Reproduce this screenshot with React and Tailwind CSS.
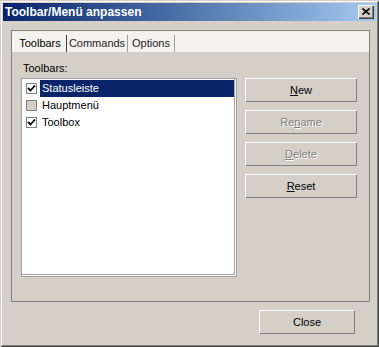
import React from 'react';

const Check = () => (
  <svg width="9" height="9" viewBox="0 0 9 9" className="block">
    <path d="M1 4 L3.5 6.5 L8 1.5" fill="none" stroke="#000" strokeWidth="1.8" />
  </svg>
);

function CheckBox({ checked }) {
  return (
    <div
      className={`w-[11px] h-[11px] border border-[#808080] flex items-center justify-center shrink-0 ${
        checked ? 'bg-white' : 'bg-[#d4d0c8]'
      }`}
    >
      {checked && <Check />}
    </div>
  );
}

function Button({ children, disabled, className = '' }) {
  return (
    <button
      className={`h-[24px] bg-[#d4d0c8] border-t border-l border-white border-b border-r border-b-[#808080] border-r-[#808080] flex items-center justify-center leading-none ${
        disabled ? 'text-[#808080] [text-shadow:1px_1px_0_#fff]' : 'text-black'
      } ${className}`}
    >
      {children}
    </button>
  );
}

export default function App() {
  const items = [
    { name: 'Statusleiste', checked: true, selected: true },
    { name: 'Hauptmenü', checked: false },
    { name: 'Toolbox', checked: true },
  ];

  return (
    <div className="w-[379px] h-[347px] bg-[#d4d0c8] p-[3px] flex flex-col font-['Liberation_Sans',Arial,sans-serif] text-[11px] text-black shadow-[inset_1px_1px_0_#d4d0c8,inset_-1px_-1px_0_#404040,inset_2px_2px_0_#fff,inset_-2px_-2px_0_#808080]">
      {/* title bar */}
      <div className="h-[18px] shrink-0 flex items-center justify-between pl-[2px] pr-[2px] bg-gradient-to-r from-[#0a246a] to-[#a6caf0]">
        <span className="text-white font-bold text-[12px] leading-none">Toolbar/Menü anpassen</span>
        <div className="w-[16px] h-[14px] bg-[#d4d0c8] flex items-center justify-center shadow-[inset_1px_1px_0_#fff,inset_-1px_-1px_0_#404040,inset_-2px_-2px_0_#808080]">
          <svg width="8" height="7" viewBox="0 0 8 7" className="block -mt-px">
            <path d="M0.5 0.5 L7.5 6.5 M7.5 0.5 L0.5 6.5" stroke="#000" strokeWidth="1.6" />
          </svg>
        </div>
      </div>

      {/* tab panel */}
      <div className="mt-[9px] ml-[8px] w-[359px] h-[272px] border border-[#808080] flex flex-col shrink-0">
        <div className="h-[21px] bg-[#f4f2ec] flex items-end pl-[1px]">
          <div className="h-[17px] w-[54px] border-l border-white border-r border-r-[#404040] flex items-center justify-center">
            Toolbars
          </div>
          <div className="h-[17px] w-[61px] border-r border-[#a0a0a0] flex items-center justify-center text-[#222]">
            Commands
          </div>
          <div className="h-[17px] w-[47px] border-r border-[#a0a0a0] flex items-center justify-center text-[#222]">
            Options
          </div>
        </div>

        <div className="flex-1 flex flex-col px-[9px]">
          <div className="mt-[10px] ml-[2px] h-[13px] leading-[13px]">Toolbars:</div>
          <div className="mt-[3px] flex gap-[8px]">
            <div className="w-[216px] h-[199px] bg-white border border-[#a0a0a0] pt-[1px] shadow-[inset_-1px_-1px_0_#fff,inset_-2px_-2px_0_#a0a0a0]">
              {items.map((it) => (
                <div key={it.name} className="h-[17px] flex items-center pl-[4px] pr-[2px]">
                  <CheckBox checked={it.checked} />
                  <div
                    className={`ml-[3px] flex-1 h-full flex items-center pl-[2px] ${
                      it.selected ? 'bg-[#0a246a] text-white' : ''
                    }`}
                  >
                    {it.name}
                  </div>
                </div>
              ))}
            </div>
            <div className="w-[112px] flex flex-col gap-[8px]">
              <Button><span><u>N</u>ew</span></Button>
              <Button disabled><span>Re<u>n</u>ame</span></Button>
              <Button disabled><span><u>D</u>elete</span></Button>
              <Button><span><u>R</u>eset</span></Button>
            </div>
          </div>
        </div>
      </div>

      {/* bottom */}
      <div className="mt-[8px] flex justify-end pr-[21px]">
        <Button className="w-[96px]">Close</Button>
      </div>
    </div>
  );
}
